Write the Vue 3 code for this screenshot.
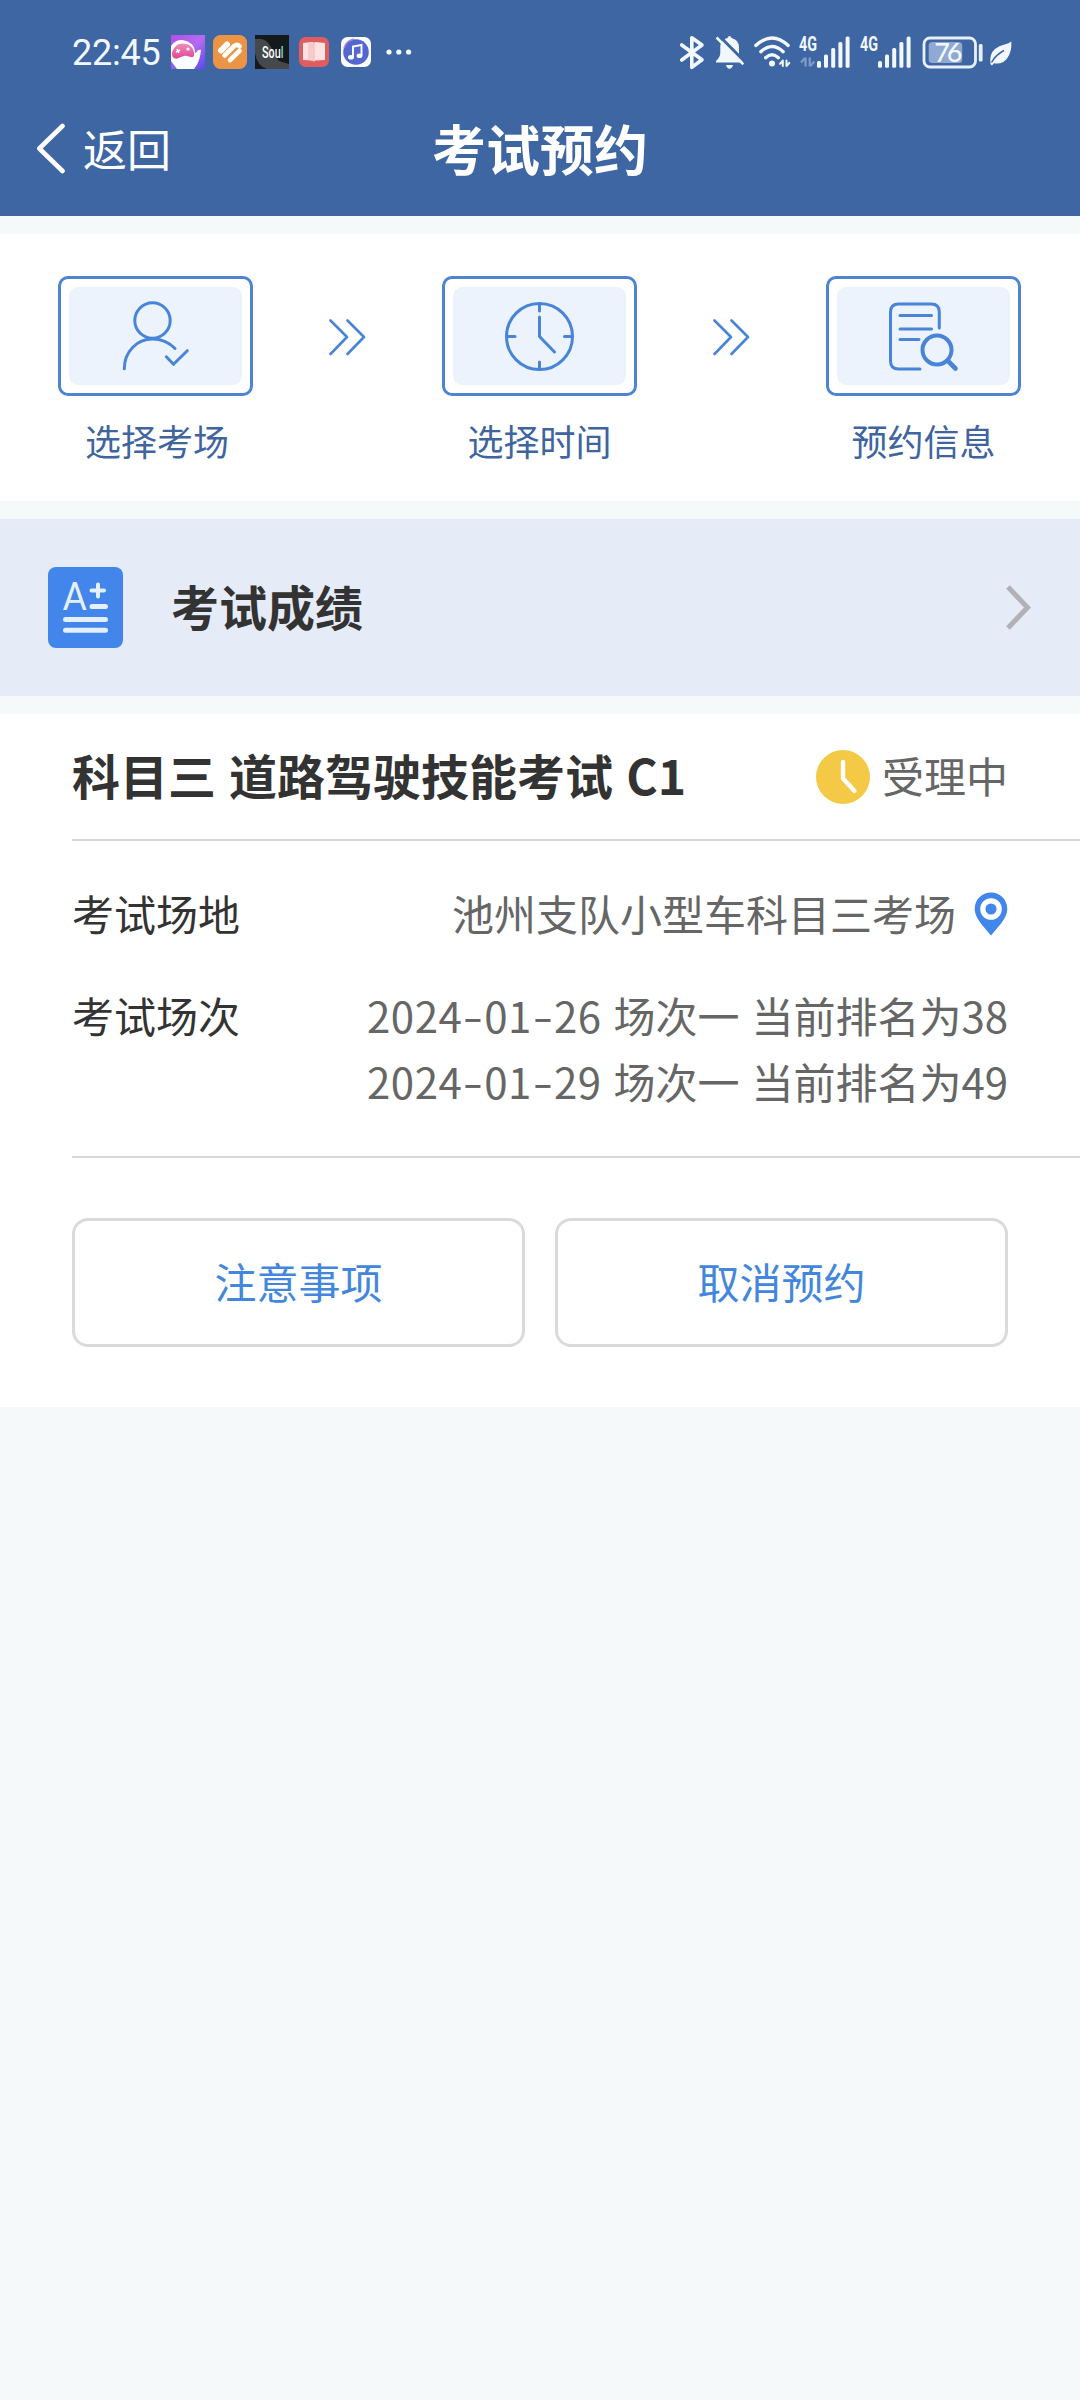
<script setup>
const sessions = [
  { date: ['2024', '01', '26'], text: '场次一 当前排名为38' },
  { date: ['2024', '01', '29'], text: '场次一 当前排名为49' },
]
const bars = [
  { x: 19, y: 27 },
  { x: 26, y: 20.5 },
  { x: 33.2, y: 14 },
  { x: 40.4, y: 8 },
  { x: 47.6, y: 2.5 },
]
</script>

<template>
  <div class="page">
    <header class="header">
      <div class="status">
        <span class="time">22:45</span>
        <div class="apps">
          <svg width="34" height="34" viewBox="0 0 34 34">
            <defs>
              <linearGradient id="gA" x1="0" y1="0" x2="1" y2="1">
                <stop offset="0" stop-color="#b04fe8" />
                <stop offset=".5" stop-color="#b56bf0" />
                <stop offset="1" stop-color="#5a48f0" />
              </linearGradient>
              <linearGradient id="gB" x1="0" y1="0" x2="0" y2="1">
                <stop offset="0" stop-color="#ee8fb8" />
                <stop offset="1" stop-color="#e0459a" />
              </linearGradient>
            </defs>
            <rect width="34" height="34" fill="url(#gA)" />
            <path d="M0 11C4 5 10 4 15 6c6 2 9 6 9 12 2 0 2-4 6-3-1 9-3 14-7 19H3L0 27Z" fill="#fff" />
            <path d="M1 18C3 10 9 7 15 9c6 1 9 7 8 12-3 3-6-1-10 0s-7 4-10 2c-2-1-2-3-2-5Z" fill="url(#gB)" />
            <path d="M5 17l4-2M6 14l2 4" stroke="#fff" stroke-width="1.5" />
            <circle cx="17" cy="14" r="1.6" fill="#fff" />
            <path d="M0 26v8h6Z" fill="#9a5cf0" />
          </svg>
          <svg class="gap8" width="34" height="34" viewBox="0 0 34 34">
            <rect width="34" height="34" rx="7.5" fill="#ec9446" />
            <g stroke="#fff" stroke-width="4.6" stroke-linecap="round" fill="none">
              <path d="M8 15.5 14 9.5" stroke-width="6" />
              <path d="M11.500 20.500 21.200 11q3-2.400 5.300.2" />
              <path d="M17 25.200 26.500 15.800" />
            </g>
          </svg>
          <svg class="gap8" width="34" height="34" viewBox="0 0 34 34">
            <rect width="34" height="34" fill="#14191b" />
            <path d="M0 4q11-2 16 8 3 9 8 14l10 3v5H12Q2 31 0 18Z" fill="#46494c" />
            <text x="7" y="23" class="soul" textLength="21.500" lengthAdjust="spacingAndGlyphs">Sou<tspan fill="#6fe0cf">l</tspan></text>
          </svg>
          <svg class="gap10" width="30" height="30" viewBox="0 0 30 30">
            <rect width="30" height="30" rx="6.500" fill="#df5d5f" />
            <path d="M4 6 14 5l1 1 1-1 10 1v17l-10 .5-1 1.500-1-1.500L4 23Z" fill="#ffe3e4" />
            <path d="M9 5.500 15 6v18l-6-1Z" fill="#f8cccf" />
            <path d="M15 6v18" stroke="#f2b9bd" stroke-width="1" />
          </svg>
          <svg class="gap12" width="30" height="30" viewBox="0 0 30 30">
            <rect width="30" height="30" rx="6.500" fill="#fbfaff" />
            <circle cx="15" cy="15" r="12.800" fill="#5467cf" />
            <path d="M3 11a13 13 0 0 1 10-9" stroke="#a58be8" stroke-width="1.500" fill="none" />
            <path d="M12 20V9.500L20.500 8v10.500" stroke="#fff" stroke-width="1.900" fill="none" />
            <ellipse cx="10" cy="20.300" rx="2.900" ry="2.300" fill="#fff" />
            <ellipse cx="18.500" cy="18.700" rx="2.900" ry="2.300" fill="#fff" />
          </svg>
          <svg class="gap16" width="26" height="8" viewBox="0 0 26 8" fill="#f3f8ff">
            <circle cx="3" cy="4" r="2.600" /><circle cx="12.800" cy="4" r="2.600" /><circle cx="22.600" cy="4" r="2.600" />
          </svg>
        </div>

        <div class="system">
          <svg width="28" height="36" viewBox="0 0 28 36" fill="none" stroke="#f3f8ff" stroke-width="3.600" stroke-linejoin="round" stroke-linecap="round">
            <path d="M3.700 11 24 25.700 13.800 33.300V3.700L24 11 3.700 26" />
          </svg>
          <svg class="gap8" width="32" height="36" viewBox="0 0 32 36">
            <path d="M10 6.500Q11 4.300 13.500 4q.5-2 2-2t2 2Q24.500 5.500 25 13v7l4 7.500v1H2v-1.500Q6.300 23 6.300 19v-7q.3-3 1.500-4.500Z" fill="#f3f8ff" />
            <path d="M12 31h7q-1 3.700-3.500 3.700T12 31Z" fill="#f3f8ff" />
            <path d="M4.800 1.500 32 29" stroke="#3d66a3" stroke-width="3" />
            <path d="M2.500 3.500 29.300 30.300" stroke="#f3f8ff" stroke-width="2.500" />
          </svg>
          <svg class="gap6" width="40" height="36" viewBox="0 0 40 36" fill="none" stroke="#f3f8ff" stroke-width="3.300" stroke-linecap="round">
            <path d="M3.800 11.500q16.200-15 32.400 0M8.800 17.700q11.200-10.200 22.400 0M13.600 23.700q6.400-6 12.800 0" />
            <circle cx="20" cy="29.500" r="3" fill="#f3f8ff" stroke="none" />
            <path d="M30.800 26.500v5.500M34.500 26.500V32M30.500 26.800l-2.500 3M34.800 31.800l2.500-3" stroke-width="2" />
          </svg>
          <svg class="gap6" width="52" height="36" viewBox="0 0 52 36">
            <text x="1" y="16.800" class="net" textLength="18" lengthAdjust="spacingAndGlyphs">4G</text>
            <path d="M7.500 23.500v9M11.800 23.500v9M7 24l-4 4.500M12.300 32l4-4.500" stroke="#7f9bc8" stroke-width="2.300" fill="none" />
            <rect v-for="b in bars" :key="b.x" :x="b.x" :y="b.y" width="4" :height="33.700 - b.y" rx="1.500" fill="#f3f8ff" />
          </svg>
          <svg class="gap10" width="52" height="36" viewBox="0 0 52 36">
            <text x="0" y="16.800" class="net" textLength="18" lengthAdjust="spacingAndGlyphs">4G</text>
            <rect v-for="b in bars" :key="b.x" :x="b.x - 1" :y="b.y" width="4" :height="33.700 - b.y" rx="1.500" fill="#f3f8ff" />
          </svg>
          <svg class="gap9" width="62" height="36" viewBox="0 0 62 36">
            <rect x="3" y="4" width="51.500" height="29" rx="6" fill="none" stroke="#e8f1fb" stroke-width="2.800" />
            <rect x="7.700" y="8" width="33.500" height="21" rx="3.500" fill="#90a9d2" />
            <text x="13.300" y="28" class="pct" textLength="28">76</text>
            <rect x="57.800" y="10" width="3.800" height="17.500" rx="1.500" fill="#e8f1fb" />
          </svg>
          <svg class="gap5" width="25" height="36" viewBox="0 0 25 36">
            <path d="M23.300 7.500Q24 18 19 24.500 14 31 6 29.200L4 31.500 2.500 30.300Q1 20 7 15q4-3.500 9.500-4.500Q21 9.500 23.300 7.500Z" fill="#f3f8ff" />
            <path d="M3.500 28.500Q8 20.500 16 16.500" stroke="#3d66a3" stroke-width="1.500" fill="none" />
          </svg>
        </div>
      </div>

      <nav class="nav">
        <div class="back">
          <svg width="32" height="52" viewBox="0 0 32 52" fill="none" stroke="#fff" stroke-width="4.600" stroke-linecap="round" stroke-linejoin="round">
            <path d="M27.500 4 4.300 26.500 27.500 49" />
          </svg>
          <span>返回</span>
        </div>
        <h1>考试预约</h1>
        <div class="side"></div>
      </nav>
    </header>

    <section class="steps">
      <div class="step">
        <div class="frame"><div class="tile">
          <svg width="76" height="76" viewBox="118 297.500 76 76" class="line">
            <circle cx="152.500" cy="320" r="17.700" />
            <path d="M124.300 368.300C124.300 351 137 338.600 152.500 338.600c8.500 0 16.500 3.500 22.500 9.400" />
            <path d="m166.300 356.300 7.200 7.500 13.800-13.600" />
          </svg>
        </div></div>
        <span class="label shift">选择考场</span>
      </div>
      <svg class="next" width="38" height="40" viewBox="0 0 38 40">
        <path d="M1.500 3.500 18 20 1.500 37M18.500 3.500 35 20 18.500 37" />
      </svg>
      <div class="step">
        <div class="frame"><div class="tile">
          <svg width="76" height="76" viewBox="502 297.500 76 76" class="line">
            <circle cx="539.500" cy="336" r="33" />
            <path d="M507 336h8M564.500 336h8M539.500 303.500v7M539.500 361.500v7M539.500 316.500V336l15 15.500" />
          </svg>
        </div></div>
        <span class="label">选择时间</span>
      </div>
      <svg class="next" width="38" height="40" viewBox="0 0 38 40">
        <path d="M1.500 3.500 18 20 1.500 37M18.500 3.500 35 20 18.500 37" />
      </svg>
      <div class="step">
        <div class="frame"><div class="tile">
          <svg width="76" height="76" viewBox="886 297.500 76 76" class="line">
            <path d="M939.300 327.500V311.500q0-8-8-8H898.500q-8 0-8 8v49q0 8 8 8H920" />
            <path d="M900 315h31.500M900 328.400h31.500M900 339h19" />
            <circle cx="937" cy="349.500" r="14.500" stroke-width="4" />
            <path d="m948 360.500 7.500 7.500" stroke-width="4.600" />
          </svg>
        </div></div>
        <span class="label">预约信息</span>
      </div>
    </section>

    <section class="scores">
      <svg width="75" height="81" viewBox="0 0 75 81">
        <rect width="75" height="81" rx="8" fill="#4286eb" />
        <text x="15" y="42.500" class="grade" textLength="23.500" lengthAdjust="spacingAndGlyphs">A</text>
        <g stroke="#e4f0fd" stroke-linecap="round">
          <path d="M43.500 23.600H56M50 17.500v12" stroke-width="4" />
          <path d="M44 39.500h13.500M17.500 52.500h40M17.500 63.300h40" stroke-width="5" />
        </g>
      </svg>
      <h2>考试成绩</h2>
      <svg width="30" height="48" viewBox="0 0 30 48" fill="none" stroke="#b0b2b5" stroke-width="5">
        <path d="M4 3 23.500 23.500 4 44" />
      </svg>
    </section>

    <section class="card">
      <div class="title">
        <h2>科目三 道路驾驶技能考试 C1</h2>
        <div class="state">
          <svg width="54" height="54" viewBox="0 0 54 54">
            <circle cx="27" cy="27" r="27" fill="#f4c945" />
            <path d="M27 12v16.500l11.300 12.300" fill="none" stroke="#fff" stroke-width="4.400" stroke-linecap="round" stroke-linejoin="round" />
          </svg>
          <span>受理中</span>
        </div>
      </div>
      <div class="info">
        <div class="row">
          <span class="key">考试场地</span>
          <div class="place">
            <span>池州支队小型车科目三考场</span>
            <svg width="34" height="44" viewBox="0 0 34 44">
              <path d="M17 .5C8 .5.7 7.500.7 17 .7 26 9 34 17 43.500 25 34 33.300 26 33.300 17 33.300 7.500 26 .5 17 .5Z" fill="#4286eb" />
              <circle cx="17" cy="17" r="8.200" fill="#4286eb" stroke="#fff" stroke-width="5.200" />
            </svg>
          </div>
        </div>
        <div class="row">
          <span class="key">考试场次</span>
          <div class="times">
            <div v-for="s in sessions" :key="s.date[2]">
              <span class="num">{{ s.date[0] }}</span><span class="dash">-</span><span class="num">{{ s.date[1] }}</span><span class="dash">-</span><span class="num">{{ s.date[2] }}</span><span>{{ ' ' + s.text }}</span>
            </div>
          </div>
        </div>
      </div>
      <div class="actions">
        <button>注意事项</button>
        <button>取消预约</button>
      </div>
    </section>
  </div>
</template>

<style>
body {
  background: #f5f9fa;
}
</style>

<style scoped>
.page {
  width: 1080px;
  min-height: 2400px;
  background: #f5f9fa;
  font-family: "Noto Sans CJK SC", sans-serif;
  color: #333;
}
svg {
  display: block;
  flex: none;
}
h1,
h2 {
  margin: 0;
}
.header {
  height: 216px;
  background: #3d66a3;
  color: #fff;
}
.status {
  height: 104px;
  padding: 0 67px 0 72px;
  display: flex;
  align-items: center;
}
.time {
  width: 99px;
  padding-top: 1px;
  font: 400 36px/40px Roboto, sans-serif;
  letter-spacing: -0.2px;
  color: #f3f8ff;
}
.apps,
.system {
  display: flex;
  align-items: center;
}
.system {
  margin-left: auto;
}
.gap5 { margin-left: 5px; }
.gap6 { margin-left: 6px; }
.gap8 { margin-left: 8px; }
.gap9 { margin-left: 9px; }
.gap10 { margin-left: 10px; }
.gap12 { margin-left: 12px; }
.gap16 { margin-left: 15px; }
.soul {
  font: 500 16px Roboto, sans-serif;
  fill: #fff;
}
.net {
  font: 700 19.500px Roboto, sans-serif;
  fill: #f3f8ff;
}
.pct {
  font: 500 27px Lato, sans-serif;
  fill: #f3f8ff;
}
.nav {
  height: 88px;
  padding: 0 35px;
  display: flex;
  align-items: center;
}
.back {
  flex: 1;
  display: flex;
  align-items: center;
  gap: 16px;
  font-size: 44px;
  line-height: 60px;
}
.side {
  flex: 1;
}
.nav h1 {
  font-size: 54px;
  line-height: 80px;
  font-weight: 700;
}
.steps {
  margin-top: 18px;
  height: 267px;
  box-sizing: border-box;
  padding: 42px 59px 0 58px;
  background: #fff;
  display: flex;
  justify-content: space-between;
}
.frame {
  width: 195px;
  height: 120px;
  box-sizing: border-box;
  padding: 8px;
  border: 3px solid #4f84d1;
  border-radius: 10px;
}
.tile {
  width: 173px;
  height: 98px;
  border-radius: 9px;
  background: #ecf3fd;
  display: flex;
  align-items: center;
  justify-content: center;
}
.line {
  fill: none;
  stroke: #4884d8;
  stroke-width: 3;
  stroke-linecap: round;
  stroke-linejoin: round;
}
.label {
  display: block;
  margin-top: 19px;
  text-align: center;
  font-size: 36px;
  line-height: 50px;
  color: #3f659f;
}
.shift {
  padding-left: 3px;
}
.next {
  margin-top: 41px;
  fill: none;
  stroke: #4884d8;
  stroke-width: 2.600;
  stroke-linecap: round;
  stroke-linejoin: round;
}
.scores {
  margin-top: 18px;
  height: 177px;
  box-sizing: border-box;
  padding: 0 46px 0 48px;
  background: #e5ecf7;
  display: flex;
  align-items: center;
}
.scores h2 {
  flex: 1;
  margin-left: 48px;
  padding-bottom: 5px;
  font-size: 48px;
  line-height: 66px;
}
.grade {
  font: 400 39px Lato, sans-serif;
  fill: #e4f0fd;
}
.card {
  margin-top: 18px;
  background: #fff;
  padding-left: 72px;
}
.title {
  height: 127px;
  box-sizing: border-box;
  padding-right: 72px;
  border-bottom: 2px solid #d7d8d9;
  display: flex;
  align-items: center;
  justify-content: space-between;
}
.title h2 {
  padding-bottom: 5px;
  font-size: 48px;
  line-height: 66px;
  word-spacing: 2.2px;
}
.state {
  display: flex;
  align-items: center;
  gap: 12px;
  font-size: 42px;
  line-height: 60px;
  color: #666;
}
.state span {
  padding-bottom: 3px;
}
.info {
  padding: 39px 72px 42px 0;
  border-bottom: 2px solid #d7d8d9;
  display: flex;
  flex-direction: column;
  gap: 36px;
  font-size: 42px;
  line-height: 66px;
}
.row {
  display: flex;
  justify-content: space-between;
}
.place {
  display: flex;
  align-items: center;
  gap: 18px;
  color: #666;
}
.place svg {
  margin-top: 2px;
}
.times {
  color: #666;
  word-spacing: 2.5px;
}
.num {
  letter-spacing: 0.5px;
}
.dash {
  display: inline-block;
  width: 22px;
  text-align: center;
  transform: translateY(-1px) scaleX(1.4);
}
.actions {
  padding: 60px 72px 60px 0;
  display: flex;
  gap: 30px;
}
.actions button {
  flex: 1;
  height: 129px;
  padding: 0 0 3px;
  border: 3px solid #dadada;
  border-radius: 16px;
  background: #fff;
  font: 42px/60px "Noto Sans CJK SC", sans-serif;
  color: #4387dc;
}
</style>
